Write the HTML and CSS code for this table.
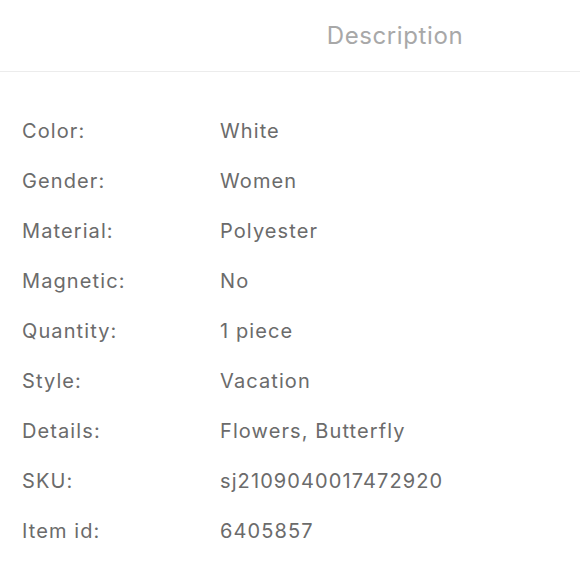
FILE: index.html
```html
<!DOCTYPE html>
<html>
<head>
<meta charset="utf-8">
<link rel="stylesheet" href="styles.css">
</head>
<body>
<header class="tabs">
  <div class="tab">Description</div>
</header>
<section class="specs">
  <div class="row"><span class="label">Color:</span><span class="value">White</span></div>
  <div class="row"><span class="label">Gender:</span><span class="value">Women</span></div>
  <div class="row"><span class="label">Material:</span><span class="value">Polyester</span></div>
  <div class="row"><span class="label">Magnetic:</span><span class="value">No</span></div>
  <div class="row"><span class="label">Quantity:</span><span class="value">1 piece</span></div>
  <div class="row"><span class="label">Style:</span><span class="value">Vacation</span></div>
  <div class="row"><span class="label">Details:</span><span class="value">Flowers, Butterfly</span></div>
  <div class="row"><span class="label">SKU:</span><span class="value">sj2109040017472920</span></div>
  <div class="row"><span class="label">Item id:</span><span class="value">6405857</span></div>
</section>
</body>
</html>
```
FILE: styles.css
```css
html, body {
  margin: 0;
  padding: 0;
  background: #fff;
  font-family: Inter, Roboto, "Liberation Sans", sans-serif;
}
.tabs {
  height: 71px;
  border-bottom: 1px solid #ececec;
  display: flex;
  align-items: center;
  justify-content: center;
  padding-left: 210px;
}
.tab {
  font-size: 24px;
  letter-spacing: 0.6px;
  color: #a8a8a8;
}
.specs {
  padding: 34px 0 0 22px;
}
.row {
  display: flex;
  height: 50px;
  align-items: center;
  font-size: 20px;
  letter-spacing: 1.1px;
  color: #6b6b6b;
}
.label {
  width: 198px;
}
```
